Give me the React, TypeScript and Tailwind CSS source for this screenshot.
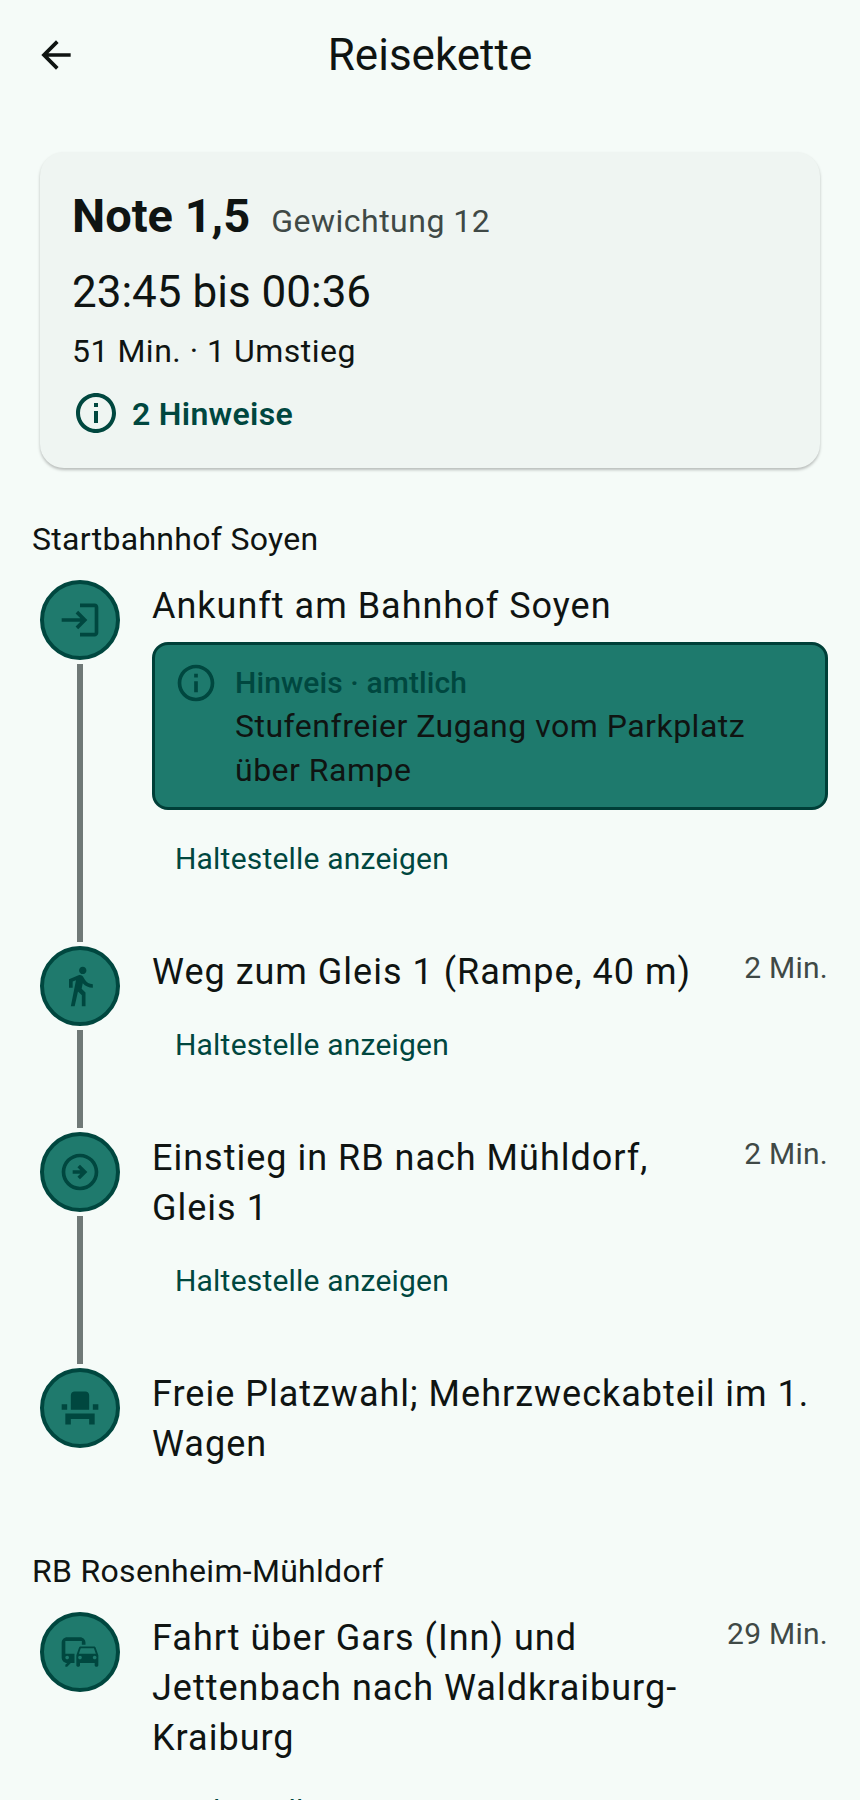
import { ReactNode } from "react";
import { MdArrowBack, MdCommute, MdDirectionsWalk, MdEventSeat, MdInfoOutline, MdLogin, MdOutlineArrowCircleRight } from "react-icons/md";

function StopButton() {
    return (
        <button className="block h-[56px] pl-[23px] text-[30px] leading-[56px] tracking-[0.2px] text-[#00473f]">
            Haltestelle anzeigen
        </button>
    );
}

type StepProps = {
    icon: ReactNode;
    title: ReactNode;
    duration?: string;
    line?: boolean;
    children?: ReactNode;
    className?: string;
};

function Step({ icon, title, duration, line = true, children, className = "" }: StepProps) {
    return (
        <div className={`flex pl-[40px] pr-[32px] ${className}`}>
            <div className="flex w-[80px] shrink-0 flex-col items-center">
                <div className="flex h-[80px] w-[80px] shrink-0 items-center justify-center rounded-full border-4 border-[#00473f] bg-[#1f7a6d] text-[#00473f]">
                    {icon}
                </div>
                {line && <div className="my-1 w-[6px] flex-1 bg-[#6f7977]" />}
            </div>
            <div className="ml-[32px] min-w-0 flex-1 pt-px">
                <div className="flex items-start justify-between">
                    <div className="min-w-0 flex-1 text-[36px] leading-[50px] tracking-[1px] text-[#0f1412]">{title}</div>
                    {duration && (
                        <div className="ml-[24px] mt-[3px] shrink-0 text-[30px] leading-[36px] tracking-[0.25px] text-[#3f4946]">{duration}</div>
                    )}
                </div>
                {children}
            </div>
        </div>
    );
}

export default function App() {
    return (
        <div className="h-[1800px] w-[860px] overflow-hidden bg-[#f5fbf8] font-[Roboto,sans-serif] text-[#0f1412]">
            <header className="relative flex h-[110px] items-center justify-center">
                <MdArrowBack size={44} className="absolute left-[34px] top-[33px]" />
                <h1 className="text-[44px] font-normal leading-[56px]">Reisekette</h1>
            </header>

            <div className="mx-[40px] mt-[42px] h-[316px] rounded-[24px] bg-[#eff5f2] pl-[32px] pt-[36px] shadow-[0_2px_3px_rgba(0,0,0,0.25)]">
                <div className="flex items-baseline">
                    <span className="text-[47px] font-bold leading-[56px]">Note 1,5</span>
                    <span className="ml-[21px] text-[32px] tracking-[0.5px] text-[#3f4946]">Gewichtung 12</span>
                </div>
                <div className="mt-[22px] text-[44px] leading-[50px]">23:45 bis 00:36</div>
                <div className="mt-[16px] text-[32px] leading-[36px] tracking-[0.5px]">51 Min. · 1 Umstieg</div>
                <div className="mt-[20px] flex h-[48px] items-center text-[#00473f]">
                    <MdInfoOutline size={48} />
                    <span className="ml-[12px] mt-[1px] text-[32px] font-semibold tracking-[0.3px]">2 Hinweise</span>
                </div>
            </div>

            <div className="mt-[53px] pl-[32px] text-[32px] leading-[36px] tracking-[0.3px]">Startbahnhof Soyen</div>

            <Step icon={<MdLogin size={44} />} title="Ankunft am Bahnhof Soyen" className="mt-[23px]">
                <div className="mt-[11px] flex h-[168px] rounded-[16px] border-[3px] border-[#003f38] bg-[#1e7a6d] pl-[19px] pt-[16px]">
                    <MdInfoOutline size={44} className="shrink-0 text-[#00473f]" />
                    <div className="ml-[17px] text-[32px] leading-[44px] tracking-[0.5px] text-[#0f1412]">
                        <div className="text-[30px] font-medium leading-[43px] tracking-[0.1px] text-[#00473f]">Hinweis · amtlich</div>
                        <div>Stufenfreier Zugang vom Parkplatz</div>
                        <div>über Rampe</div>
                    </div>
                </div>
                <div className="mt-[21px] pb-[59px]">
                    <StopButton />
                </div>
            </Step>

            <Step icon={<MdDirectionsWalk size={44} />} title="Weg zum Gleis 1 (Rampe, 40 m)" duration="2 Min.">
                <div className="mt-[20px] pb-[59px]">
                    <StopButton />
                </div>
            </Step>

            <Step icon={<MdOutlineArrowCircleRight size={44} />} title={<>Einstieg in RB nach Mühldorf,<br />Gleis 1</>} duration="2 Min.">
                <div className="mt-[20px] pb-[59px]">
                    <StopButton />
                </div>
            </Step>

            <Step icon={<MdEventSeat size={44} />} title="Freie Platzwahl; Mehrzweckabteil im 1. Wagen" line={false} />

            <div className="mt-[84px] pl-[32px] text-[32px] leading-[36px] tracking-[0.3px]">RB Rosenheim-Mühldorf</div>

            <Step icon={<MdCommute size={44} />} title={<>Fahrt über Gars (Inn) und<br />Jettenbach nach Waldkraiburg-<br />Kraiburg</>} duration="29 Min." line={false} className="mt-[23px]">
                <div className="mt-[20px]">
                    <StopButton />
                </div>
            </Step>
        </div>
    );
}
